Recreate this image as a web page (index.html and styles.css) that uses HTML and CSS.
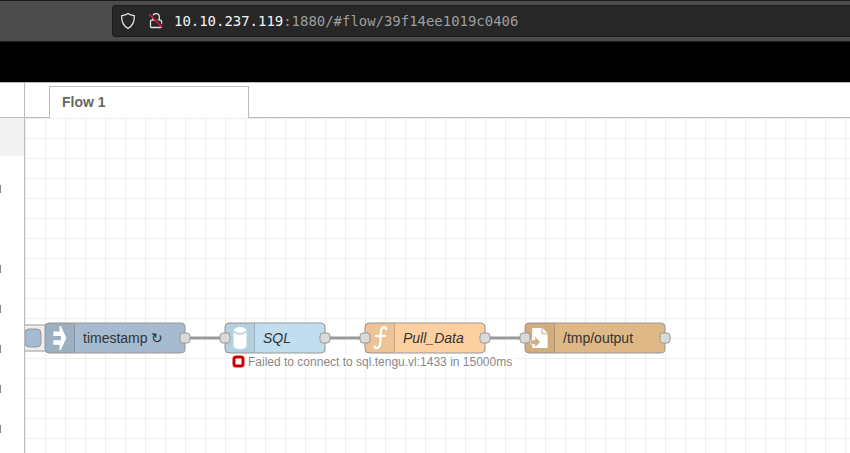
FILE: index.html
```html
<!DOCTYPE html>
<html lang="en">
<head>
<meta charset="utf-8">
<title>Node-RED</title>
<link rel="stylesheet" href="styles.css">
</head>
<body>
<div class="toolbar">
  <div class="urlbar">
    <svg class="shield" width="16" height="18" viewBox="0 0 16 18"><path d="M8 1.5C6.5 2.7 4.3 3.4 1.7 3.7C1.4 9.7 3.2 13.7 8 16.4C12.8 13.7 14.600 9.7 14.300 3.700C11.700 3.400 9.500 2.700 8 1.500Z"/></svg>
    <svg class="lock" width="16" height="18" viewBox="0 0 16 18"><path d="M4.700 8V5A3.300 3.300 0 0 1 11.300 5V8M3.500 8.200H12.500Q13.500 8.200 13.500 9.200V14.500Q13.500 15.500 12.500 15.500H3.500Q2.500 15.500 2.500 14.500V9.200Q2.500 8.200 3.500 8.200Z"/><path class="gap" d="M2 1.300L15 14.300"/><path class="strike" d="M1.200 2.300L14.600 15.700"/></svg>
    <div class="url"><b>10.10.237.119</b>:1880/#flow/39f14ee1019c0406</div>
  </div>
</div>
<div class="header"></div>
<div class="main">
  <div class="palette">
    <div class="search"></div>
    <div class="category"></div>
    <div class="marks"><i class="wide"></i><i></i><i></i><i></i><i></i><i></i></div>
  </div>
  <div class="workspace">
    <div class="tabs"><div class="tab">Flow 1</div></div>
    <svg class="chart" width="825" height="335" viewBox="25 118 825 335">
      <defs><pattern id="grid" x="25" y="118" width="20" height="20" patternUnits="userSpaceOnUse"><path class="grid" d="M0 .5H20M.5 0V20"/></pattern></defs>
      <rect x="25" y="118" width="825" height="335" fill="url(#grid)"/>
      <path class="wire" d="M185 338H225M325 338H365M485 338H525"/>

      <rect class="button-base" x="20" y="325" width="32" height="26" rx="4"/>
      <rect class="button inject" x="25" y="329" width="16" height="18" rx="4"/>

      <rect class="inject" x="45" y="323" width="140" height="30" rx="4"/>
      <path class="shade" d="M49 323H75V353H49Q45 353 45 349V327Q45 323 49 323Z"/>
      <path class="divider" d="M74.500 324V352"/>
      <path class="white" d="M53.300 331.500H59.500V326H60.800L66.400 338L60.800 350H59.500V344.700H53.300V340.300H61V336H53.300Z"/>
      <text class="label" x="83" y="343">timestamp ↻</text>

      <rect class="sql" x="225" y="323" width="100" height="30" rx="4"/>
      <path class="shade" d="M229 323H255V353H229Q225 353 225 349V327Q225 323 229 323Z"/>
      <path class="divider" d="M254.500 324V352"/>
      <ellipse class="white" cx="240" cy="330" rx="6.300" ry="2.900"/>
      <path class="white" d="M233.500 331.800Q235 334.600 240 334.600T246.500 331.800V346.200Q245 349 240 349T233.500 346.200Z"/>
      <text class="label italic" x="263" y="343">SQL</text>

      <rect class="function" x="365" y="323" width="120" height="30" rx="4"/>
      <path class="shade" d="M369 323H395V353H369Q365 353 365 349V327Q365 323 369 323Z"/>
      <path class="divider" d="M394.500 324V352"/>
      <path class="fn" d="M386.200 329.200Q385.800 327.200 383.800 327.200Q381.200 327.600 380.900 332L380.200 343Q379.800 347.700 377.200 348.200Q375.200 348.400 374.800 346.400M376 335.800H385"/>
      <text class="label italic" x="403" y="343">Pull_Data</text>

      <rect class="file" x="525" y="323" width="140" height="30" rx="4"/>
      <path class="shade" d="M529 323H555V353H529Q525 353 525 349V327Q525 323 529 323Z"/>
      <path class="divider" d="M554.500 324V352"/>
      <path class="white" d="M532.200 328H541.500V334.200H547.600V348H532.200ZM542.500 328L547.600 333.200H542.500Z"/>
      <path class="arrow" d="M530.500 340H535V336.600L540.300 342L535 347.400V344.500H530.500Z"/>
      <text class="label" x="563" y="343">/tmp/output</text>

      <g class="ports">
        <rect x="180" y="333" width="10" height="10" rx="3"/><rect x="220" y="333" width="10" height="10" rx="3"/>
        <rect x="320" y="333" width="10" height="10" rx="3"/><rect x="360" y="333" width="10" height="10" rx="3"/>
        <rect x="480" y="333" width="10" height="10" rx="3"/><rect x="520" y="333" width="10" height="10" rx="3"/>
        <rect x="660" y="333" width="10" height="10" rx="3"/>
      </g>
      <rect class="status-bg" x="230" y="355" width="285" height="14"/>
      <rect class="status-dot" x="234" y="357" width="9" height="9" rx="2"/>
      <text class="status" x="248" y="366">Failed to connect to sql.tengu.vl:1433 in 15000ms</text>
    </svg>
  </div>
</div>
</body>
</html>
```
FILE: styles.css
```css
body { margin: 0; width: 850px; height: 453px; overflow: hidden; background: #fff; font-family: "Liberation Sans", Arial, sans-serif; }
* { box-sizing: border-box; }
svg { display: block; }

.toolbar { height: 42px; padding: 4px 0 0 112px; background: #4b4b4b; border-top: 1px solid #1c1c1c; border-bottom: 1px solid #222; }
.urlbar { height: 32px; display: flex; align-items: center; background: #272727; border: 1px solid #1b1b1b; border-right: 0; border-radius: 4px 0 0 4px; padding-left: 7px; }
.urlbar svg { fill: none; stroke: #e2e2e2; stroke-width: 1.3; }
.lock { margin-left: 12px; }
.urlbar .gap { stroke: #272727; stroke-width: 1.5; }
.urlbar .strike { stroke: #e2143f; stroke-width: 1.5; }
.url { margin-left: 10px; font: 14px/20px "DejaVu Sans Mono", monospace; letter-spacing: -0.03px; color: #9e9e9e; white-space: pre; }
.url b { font-weight: normal; color: #f4f4f4; }

.header { height: 40px; background: #000; }
.main { height: 371px; display: flex; border-top: 1px solid #bbb; }
.palette { width: 25px; border-right: 1px solid #bbb; }
.search { height: 35px; border-bottom: 1px solid #bbb; }
.category { height: 38px; background: #f3f3f3; }
.marks { padding-top: 29px; display: flex; flex-direction: column; gap: 32px; }
.marks i { width: 1px; height: 8px; background: #888; }
.marks .wide { margin-bottom: 40px; }

.workspace { width: 825px; }
.tabs { height: 35px; padding: 3px 0 0 24px; border-bottom: 1px solid #bbb; }
.tab { width: 200px; height: 32px; padding-left: 12px; border: 1px solid #bbb; border-bottom: 0; background: #fff; font-size: 14px; line-height: 31px; font-weight: bold; color: #666; }

.grid { stroke: #eee; fill: none; }
.wire { stroke: #999; stroke-width: 3; fill: none; }
.button-base { fill: #eee; stroke: #bbb; stroke-width: 1.5; }
.inject { fill: #a6bbcf; stroke: #999; }
.sql { fill: #c0deed; stroke: #999; }
.function { fill: #fdd0a2; stroke: #999; }
.file { fill: #deb887; stroke: #999; }
.shade { fill: #000; fill-opacity: .06; }
.divider { stroke: #000; stroke-opacity: .14; }
.white { fill: #fff; }
.fn { fill: none; stroke: #fff; stroke-width: 2.3; stroke-linecap: round; }
.arrow { fill: #d1ad7f; stroke: #fff; stroke-width: .5; }
.label { font-size: 14px; fill: #333; }
.italic { font-style: italic; }
.ports rect { fill: #d9d9d9; stroke: #999; }
.status-bg { fill: #fff; }
.status-dot { fill: #fff; stroke: #c00; stroke-width: 3; }
.status { font-size: 12px; fill: #888; }
```
